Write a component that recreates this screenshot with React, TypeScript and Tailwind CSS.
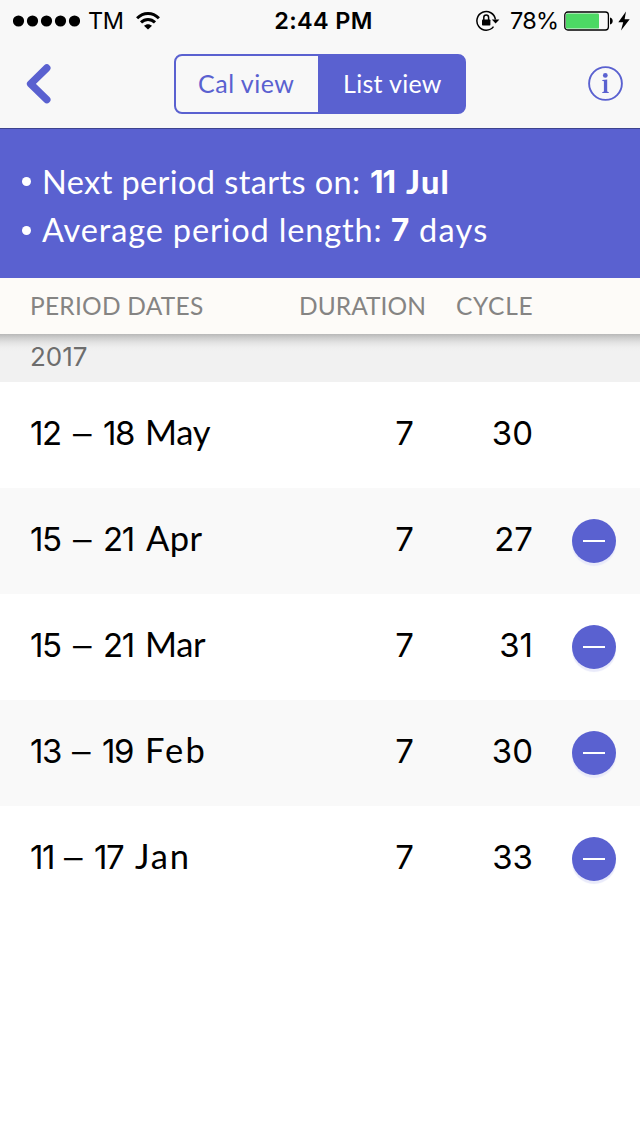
type Entry = {
  from: string;
  fromClass: string;
  to: string;
  toClass: string;
  month: string;
  monthClass: string;
  duration: string;
  cycle: string;
  removable: boolean;
};

const entries: Entry[] = [
  { from: "12", fromClass: "w-[43px]", to: "18", toClass: "w-[42px]", month: "May", monthClass: "tracking-[-0.3px]", duration: "7", cycle: "30", removable: false },
  { from: "15", fromClass: "w-[43px]", to: "21", toClass: "w-[43px]", month: "Apr", monthClass: "tracking-[0.4px]", duration: "7", cycle: "27", removable: true },
  { from: "15", fromClass: "w-[43px]", to: "21", toClass: "w-[42px]", month: "Mar", monthClass: "tracking-[-0.3px]", duration: "7", cycle: "31", removable: true },
  { from: "13", fromClass: "w-[42px]", to: "19", toClass: "w-[43px]", month: "Feb", monthClass: "tracking-[2.1px]", duration: "7", cycle: "30", removable: true },
  { from: "11", fromClass: "w-[34px]", to: "17", toClass: "w-[41px]", month: "Jan", monthClass: "tracking-[1.8px]", duration: "7", cycle: "33", removable: true },
];

function StatusBar() {
  return (
    <div className="grid h-10 grid-cols-[1fr_auto_1fr] items-center pl-[13px] pr-[10px] font-['Inter',sans-serif] text-[23.5px] leading-10 text-black">
      <div className="flex items-center">
        <svg width="67" height="12" viewBox="0 0 67 12">
          {[5.5, 19.5, 33.5, 47.5, 61.5].map((cx) => (
            <circle key={cx} cx={cx} cy="6" r="5.6" />
          ))}
        </svg>
        <span className="ml-[8px] w-[35px] tracking-[-0.4px]">TM</span>
        <svg className="ml-[12px]" width="26" height="20" viewBox="0 0 26 20" fill="none" stroke="#000" strokeWidth="3">
          <path d="M2.1 7.2C8.5 .9 17.5 .9 23.9 7.2" />
          <path d="M6 11.4C10 7.5 16 7.5 20 11.4" />
          <path d="M13 18.6L9 14.7C11.4 12.6 14.6 12.6 17 14.7Z" fill="#000" stroke="none" />
        </svg>
      </div>
      <div className="ml-[4px] pt-[1px] font-semibold tracking-[0.3px]">2:44 PM</div>
      <div className="flex items-center justify-end">
        <svg width="24" height="22" viewBox="0 0 24 22" fill="none" stroke="#000" strokeWidth="1.5">
          <path d="M17.5 16.6A9.3 9.3 0 1 1 19.4 9.5" />
          <path d="M15.8 9.4H23.4L19.6 13.6Z" fill="#000" stroke="none" />
          <rect x="6" y="9.4" width="8.4" height="6.2" rx=".8" fill="#000" stroke="none" />
          <path d="M7.8 10V7.4a2.4 2.4 0 0 1 4.8 0V10" />
        </svg>
        <span className="ml-[10px] w-[49px] pt-[1px] whitespace-nowrap tracking-[-0.7px]">78%</span>
        <svg className="ml-[5px]" width="50" height="20" viewBox="0 0 50 20">
          <rect x=".8" y="1" width="43.6" height="18" rx="3" fill="none" stroke="#000" strokeWidth="1.3" />
          <rect x="2" y="2.6" width="33" height="15" rx="1.2" fill="#4cd964" />
          <path d="M46 6.5c3.6 .6 3.6 6.4 0 7Z" />
        </svg>
        <svg className="ml-[4px]" width="12" height="20" viewBox="0 0 12 20">
          <path d="M8 .5L.3 11.2H5.2L3 19.5L11.7 8.2H6.6Z" />
        </svg>
      </div>
    </div>
  );
}

function NavBar() {
  return (
    <div className="flex h-[88px] items-start pl-[26px] pr-[17px] pt-[14px]">
      <svg className="mt-[9px]" width="26" height="42" viewBox="0 0 26 42" fill="none" stroke="#5a61d0" strokeWidth="7.4" strokeLinecap="round" strokeLinejoin="round">
        <path d="M20.8 5L4.6 20.8L20.8 36.7" />
      </svg>
      <div className="ml-[122px] flex h-[60px] w-[292px] overflow-hidden rounded-lg border-2 border-[#5a61d0] bg-[linear-gradient(90deg,#f8f8f8_50%,#5a61d0_50%)] font-['Lato',sans-serif] text-[25px] leading-[54px]">
        <div className="w-[142px] pl-[22px] tracking-[0.5px] whitespace-nowrap text-[#5a61d0]">Cal view</div>
        <div className="flex-1 bg-[#5a61d0] pl-[25px] tracking-[0.3px] whitespace-nowrap text-white">List view</div>
      </div>
      <svg className="mt-[12px] ml-auto" width="35" height="35" viewBox="0 0 35 35">
        <circle cx="17.5" cy="17.5" r="16.4" fill="none" stroke="#5a61d0" strokeWidth="1.9" />
        <circle cx="17.3" cy="9.4" r="2.4" fill="#5a61d0" />
        <path d="M14.2 14L19.2 13.4V25.6L20.8 26.2V27H14.2V26.2L15.9 25.6V15.2L14.2 14.7Z" fill="#5a61d0" />
      </svg>
    </div>
  );
}

function Summary() {
  return (
    <div className="h-[150px] border-t border-[#3d438f] bg-[#5a61d0] pl-[22px] pt-[28px] font-['Lato',sans-serif] text-[32.5px] leading-[48px] text-white">
      <div className="flex items-center whitespace-nowrap">
        <span className="mr-[11px] size-[9px] rounded-full bg-white" />
        <span className="w-[328px] tracking-[0.4px]">Next period starts on:</span>
        <span className="w-[36px] pt-[1px] font-['Inter',sans-serif] text-[31.5px] font-bold tracking-[-1.2px]">11</span>
        <span className="font-black tracking-[1.3px]">Jul</span>
      </div>
      <div className="flex h-[48px] items-center whitespace-nowrap">
        <span className="mr-[11px] size-[9px] rounded-full bg-white" />
        <span className="w-[349px] pb-[1px] tracking-[0.85px]">Average period length:</span>
        <span className="w-[28px] font-['Inter',sans-serif] text-[31.5px] font-bold">7</span>
        <span className="pb-[1px] tracking-[1.3px]">days</span>
      </div>
    </div>
  );
}

function ColumnHeader() {
  return (
    <div className="flex h-[56px] bg-[#fdfbf8] pl-[30px] font-['Lato',sans-serif] text-[24.5px] leading-[55px] whitespace-nowrap text-[#858483]">
      <div className="w-[269px] tracking-[0.25px]">PERIOD DATES</div>
      <div className="w-[157px] tracking-[0.05px]">DURATION</div>
      <div className="tracking-[0.7px]">CYCLE</div>
    </div>
  );
}

function Row({ entry, shaded }: { entry: Entry; shaded: boolean }) {
  return (
    <div
      className={`flex h-[106px] items-center pl-[30px] font-['Inter',sans-serif] text-[33px] leading-[40px] text-black ${
        shaded ? "bg-[#f9f9f9]" : "bg-white"
      }`}
    >
      <div className="flex w-[299px] items-baseline pb-[6px] whitespace-nowrap">
        <span className={`tracking-[-1.4px] ${entry.fromClass}`}>{entry.from}</span>
        <span className="w-[30px] translate-y-[2px] text-[37px] font-light">–</span>
        <span className={`tracking-[-1.4px] ${entry.toClass}`}>{entry.to}</span>
        <span className={`font-['Lato',sans-serif] text-[34.5px] ${entry.monthClass}`}>{entry.month}</span>
      </div>
      <div className="w-[85px] pb-[4px] text-right">{entry.duration}</div>
      <div className="w-[119px] pb-[4px] text-right">{entry.cycle}</div>
      {entry.removable && (
        <button className="ml-[39px] flex size-[44px] items-center justify-center rounded-full bg-[#5a61d0] shadow-[0_3px_1px_#e9eafa]">
          <span className="h-[2px] w-[22px] bg-white" />
        </button>
      )}
    </div>
  );
}

export default function App() {
  return (
    <div className="flex h-[1136px] w-[640px] flex-col overflow-hidden bg-white">
      <header className="bg-[#f8f8f8]">
        <StatusBar />
        <NavBar />
      </header>
      <Summary />
      <ColumnHeader />
      <div className="h-[48px] bg-[linear-gradient(180deg,#b8b8b8_0px,#cfcfcf_4px,#e4e4e4_9px,#eeeeee_13px,#f1f1f1_17px)] pl-[30px] font-['Inter',sans-serif] text-[26px] leading-[46px] text-[#6d6d6d]">
        2017
      </div>
      {entries.map((entry, index) => (
        <Row key={entry.month} entry={entry} shaded={index % 2 === 1} />
      ))}
    </div>
  );
}
